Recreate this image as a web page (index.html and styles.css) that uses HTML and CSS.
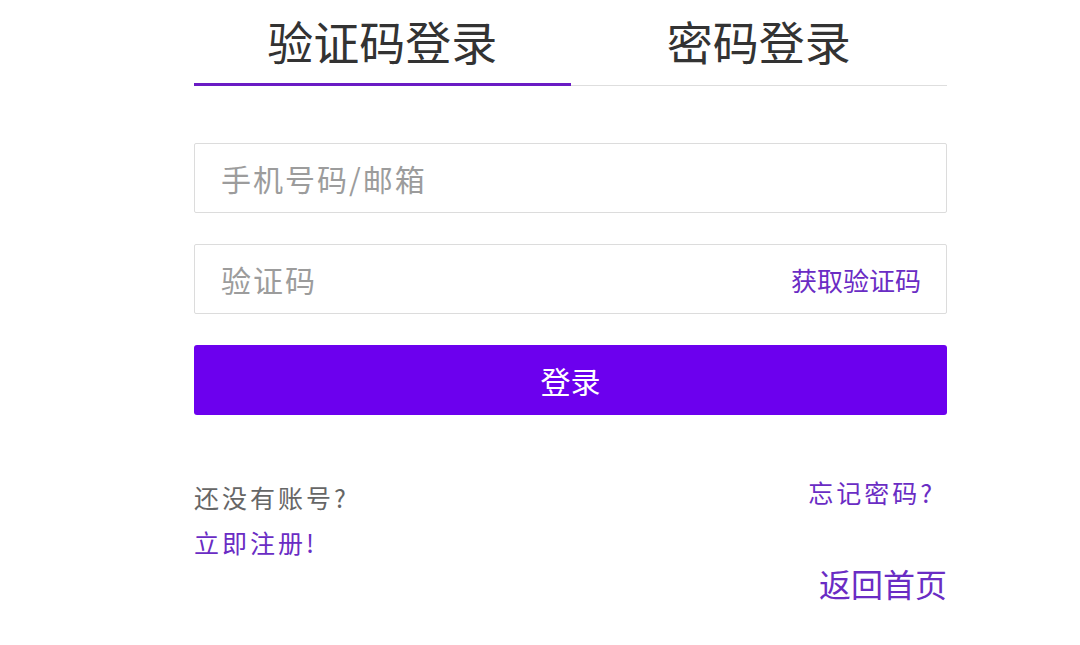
FILE: index.html
```html
<!DOCTYPE html>
<html lang="zh-CN">
<head>
<meta charset="utf-8">
<title>登录</title>
<link rel="stylesheet" href="styles.css">
</head>
<body>
<div class="login">
  <div class="tabs">
    <div class="tab active">验证码登录</div>
    <div class="tab">密码登录</div>
  </div>
  <form class="form">
    <div class="field"><input class="input" type="text" placeholder="手机号码/邮箱"></div>
    <div class="field">
      <input class="input" type="text" placeholder="验证码">
      <span class="getcode">获取验证码</span>
    </div>
    <button class="submit" type="button">登录</button>
  </form>
  <div class="footer">
    <div class="left">
      <div class="muted">还没有账号?</div>
      <a class="link" href="#">立即注册!</a>
    </div>
    <a class="link forgot" href="#">忘记密码?</a>
  </div>
  <div class="home"><a class="link" href="#">返回首页</a></div>
</div>
</body>
</html>
```
FILE: styles.css
```css
* { box-sizing: border-box; }
html, body { margin: 0; padding: 0; background: #fff; }
body {
  font-family: "Noto Sans CJK SC", "Noto Sans", sans-serif;
  color: #333;
}
.login {
  width: 753px;
  margin-left: 194px;
}
.tabs {
  display: flex;
  border-bottom: 1px solid #dedede;
}
.tab {
  flex: 1;
  text-align: center;
  font-size: 46px;
  line-height: 60px;
  padding-top: 10px;
  padding-bottom: 13px;
  color: #333;
}
.tab.active {
  border-bottom: 3px solid #6a1bc4;
  margin-bottom: -1px;
}
.form {
  margin-top: 57px;
  display: flex;
  flex-direction: column;
  gap: 31px;
}
.field {
  display: flex;
  align-items: center;
  height: 70px;
  border: 1px solid #dcdcdc;
  border-radius: 2px;
  padding: 0 25px 0 26px;
}
.input {
  flex: 1;
  min-width: 0;
  border: none;
  outline: none;
  font-family: inherit;
  font-size: 30px;
  letter-spacing: 2px;
  color: #333;
  background: transparent;
  padding: 0;
}
.input::placeholder { color: #9c9c9c; }
.getcode {
  font-size: 26px;
  color: #6a2cc4;
}
.submit {
  height: 70px;
  border: none;
  border-radius: 3px;
  background: #6c00ee;
  color: #fff;
  font-family: inherit;
  font-size: 30px;
  cursor: pointer;
}
.footer {
  margin-top: 60px;
  display: flex;
  justify-content: space-between;
  align-items: flex-start;
}
.left {
  display: flex;
  flex-direction: column;
  font-size: 25px;
  letter-spacing: 3px;
  line-height: 45px;
}
.muted { color: #666; }
.link {
  color: #6a2cc4;
  text-decoration: none;
}
.forgot {
  font-size: 25px;
  letter-spacing: 3px;
  line-height: 34px;
  margin-right: 12px;
}
.home {
  text-align: right;
  font-size: 32px;
  line-height: 36px;
}
```
